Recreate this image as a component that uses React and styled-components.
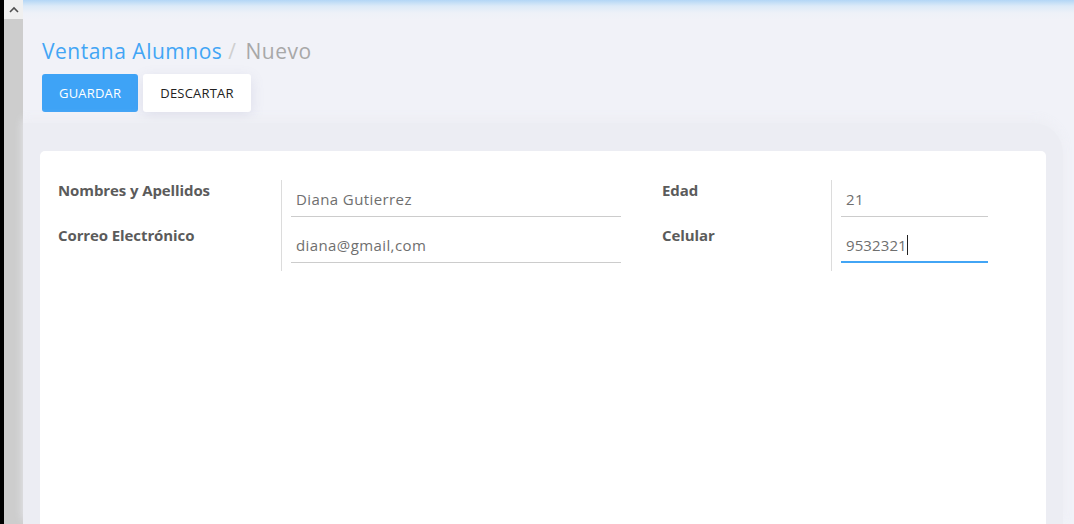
import React from 'react';
import styled, { createGlobalStyle } from 'styled-components';

const GlobalStyle = createGlobalStyle`
  html, body {
    margin: 0;
    padding: 0;
    height: 100%;
    overflow: hidden;
    background: #f1f2f8;
    font-family: "Open Sans", "Liberation Sans", sans-serif;
  }
  #root {
    height: 100%;
  }
`;

const Shell = styled.div`
  display: flex;
  height: 524px;
`;

const Scrollbar = styled.div`
  width: 19px;
  border-left: 4px solid #000;
  background: #cdcdcd;
  display: flex;
  flex-direction: column;
`;

const ScrollButton = styled.div`
  height: 19px;
  background: #f0f0f0;
  display: flex;
  align-items: center;
  justify-content: center;
`;

const Main = styled.div`
  flex: 1;
  display: flex;
  flex-direction: column;
  background: linear-gradient(to bottom, #b3d6f6 0px, #dceaf8 6px, #eef1f8 13px, #f1f2f8 20px);
`;

const Header = styled.header`
  padding: 36px 19px 11px;
`;

const Breadcrumb = styled.h1`
  margin: 0;
  font-size: 21px;
  font-weight: 400;
  line-height: 31px;
  color: #42a5f5;
  letter-spacing: 0.5px;
`;

const Slash = styled.span`
  color: #cfcfcf;
  margin: 0 9px 0 6px;
`;

const Current = styled.span`
  color: #a8a8a8;
`;

const Actions = styled.div`
  display: flex;
  gap: 5px;
  margin-top: 7px;
`;

const Button = styled.button`
  height: 38px;
  padding: 0 17px;
  border: none;
  border-radius: 3px;
  font-family: inherit;
  font-size: 13px;
  font-weight: 500;
  letter-spacing: 0.2px;
  background: ${p => (p.$primary ? '#3ea3f6' : '#ffffff')};
  color: ${p => (p.$primary ? '#ffffff' : '#222222')};
  box-shadow: ${p => (p.$primary ? 'none' : '0 4px 14px rgba(120, 120, 170, 0.16)')};
`;

const Section = styled.section`
  flex: 1;
  margin-right: 11px;
  background: #ecedf3;
  border-top-right-radius: 30px;
  box-shadow: 0 -4px 10px rgba(236, 237, 243, 0.9);
  padding: 28px 17px 0;
  display: flex;
`;

const Card = styled.div`
  flex: 1;
  background: #ffffff;
  border-radius: 5px 5px 0 0;
  padding: 29px 18px 0;
  display: flex;
  align-items: flex-start;
  gap: 41px;
`;

const FieldGroup = styled.div`
  display: flex;
`;

const Labels = styled.div`
  width: ${p => p.$width}px;
  display: flex;
  flex-direction: column;
`;

const Label = styled.div`
  height: 45px;
  line-height: 20px;
  font-size: 15px;
  font-weight: 700;
  color: #5b5b5b;
  letter-spacing: -0.1px;
`;

const Fields = styled.div`
  border-left: 1px solid #dcdcdc;
  padding: 1px 0 8px 9px;
  display: flex;
  flex-direction: column;
  gap: 10px;
`;

const Field = styled.div`
  width: ${p => p.$width}px;
  height: 36px;
  box-sizing: border-box;
  border-bottom: ${p => (p.$focused ? '2px solid #42a5f5' : '1px solid #cccccc')};
  padding: ${p => (p.$focused ? '1px' : '0')} 5px 0;
  display: flex;
  align-items: center;
  font-size: 15px;
  letter-spacing: ${p => (p.$focused ? '0.1px' : '0.4px')};
  color: #6f6f6f;
`;

const Caret = styled.span`
  width: 1px;
  height: 20px;
  background: #222;
`;

const fields = [
  {
    labelWidth: 223,
    inputWidth: 330,
    rows: [
      { label: 'Nombres y Apellidos', value: 'Diana Gutierrez' },
      { label: 'Correo Electrónico', value: 'diana@gmail,com' },
    ],
  },
  {
    labelWidth: 169,
    inputWidth: 147,
    rows: [
      { label: 'Edad', value: '21' },
      { label: 'Celular', value: '9532321', focused: true },
    ],
  },
];

export default function App() {
  return (
    <>
      <GlobalStyle />
      <Shell>
        <Scrollbar>
          <ScrollButton>
            <svg width="10" height="7" viewBox="0 0 10 7">
              <path d="M1 6 L5 2 L9 6" fill="none" stroke="#505050" strokeWidth="1.6" />
            </svg>
          </ScrollButton>
        </Scrollbar>
        <Main>
          <Header>
            <Breadcrumb>
              Ventana Alumnos<Slash>/</Slash><Current>Nuevo</Current>
            </Breadcrumb>
            <Actions>
              <Button $primary>GUARDAR</Button>
              <Button>DESCARTAR</Button>
            </Actions>
          </Header>
          <Section>
            <Card>
              {fields.map((group, i) => (
                <FieldGroup key={i}>
                  <Labels $width={group.labelWidth}>
                    {group.rows.map(r => (
                      <Label key={r.label}>{r.label}</Label>
                    ))}
                  </Labels>
                  <Fields>
                    {group.rows.map(r => (
                      <Field key={r.label} $width={group.inputWidth} $focused={r.focused}>
                        {r.value}
                        {r.focused && <Caret />}
                      </Field>
                    ))}
                  </Fields>
                </FieldGroup>
              ))}
            </Card>
          </Section>
        </Main>
      </Shell>
    </>
  );
}
